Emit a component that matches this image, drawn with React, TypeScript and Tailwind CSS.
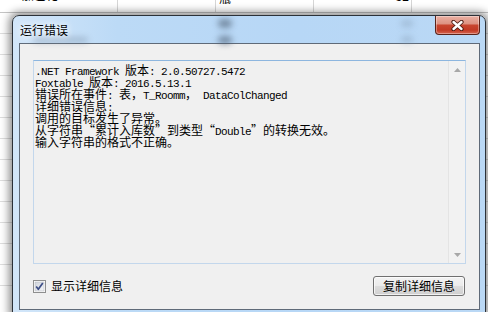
import React from "react";

const A =
  "inline-block w-[6px] h-[12px] leading-[12px] text-[11px] whitespace-pre [font-family:'Liberation_Mono','DejaVu_Sans_Mono',monospace]";
const C =
  "inline-block w-[12px] h-[12px] leading-[12px] text-[12px] whitespace-pre [font-family:'Noto_Sans_CJK_SC',sans-serif]";
const CQO =
  "inline-block w-[12px] h-[12px] leading-[12px] text-[12px] text-right whitespace-pre [font-family:'Noto_Sans_CJK_SC',sans-serif]";
const CQC =
  "inline-block w-[12px] h-[12px] leading-[12px] text-[12px] text-left whitespace-pre [font-family:'Noto_Sans_CJK_SC',sans-serif]";

function MonoLine({ text }: { text: string }) {
  return (
    <div className="h-[12px] leading-[12px] whitespace-nowrap text-black">
      {Array.from(text).map((ch, i) => {
        if (ch.charCodeAt(0) < 128)
          return (
            <span key={i} className={A}>
              {ch}
            </span>
          );
        if (ch === "“")
          return (
            <span key={i} className={CQO}>
              {ch}
            </span>
          );
        if (ch === "”")
          return (
            <span key={i} className={CQC}>
              {ch}
            </span>
          );
        return (
          <span key={i} className={C}>
            {ch}
          </span>
        );
      })}
    </div>
  );
}

const lines = [
  ".NET Framework 版本: 2.0.50727.5472",
  "Foxtable 版本: 2016.5.13.1",
  "错误所在事件: 表，T_Roomm， DataColChanged",
  "详细错误信息:",
  "调用的目标发生了异常。",
  "从字符串“累计入库数”到类型“Double”的转换无效。",
  "输入字符串的格式不正确。",
];

const cjk = "[font-family:'Noto_Sans_CJK_SC',sans-serif]";

export default function App() {
  return (
    <div className="relative w-[488px] h-[312px] overflow-hidden bg-white">
      {/* spreadsheet in background */}
      <div className="flex flex-col">
        <div className="flex h-[13px] border-b border-[#c4c4c4] text-[12px] text-black overflow-hidden [font-family:'Noto_Sans_CJK_SC',sans-serif]">
          <div className="w-[118px] border-r border-[#d6d6d6] pl-[22px]">
            <div className="-mt-[12px] leading-[14px]">加己化</div>
          </div>
          <div className="w-[98px] border-r border-[#d6d6d6]" />
          <div className="w-[98px] border-r border-[#d6d6d6] pl-[3px]">
            <div className="-mt-[9px] leading-[14px]">瓶</div>
          </div>
          <div className="w-[98px] border-r border-[#d6d6d6] pr-[2px] text-right">
            <div className="-mt-[11px] leading-[14px]">32</div>
          </div>
          <div className="flex-1" />
        </div>
        <div className="h-[21px] border-b border-[#dedede]" />
        <div className="h-[21px] border-b border-[#dedede]" />
        <div className="h-[21px] border-b border-[#dedede]" />
        <div className="h-[21px] border-b border-[#dedede]" />
        <div className="h-[21px] border-b border-[#dedede]" />
        <div className="h-[21px] border-b border-[#dedede]" />
        <div className="h-[21px] border-b border-[#dedede]" />
        <div className="h-[21px] border-b border-[#dedede]" />
        <div className="h-[21px] border-b border-[#dedede]" />
        <div className="h-[21px] border-b border-[#dedede]" />
        <div className="h-[21px] border-b border-[#dedede]" />
        <div className="h-[21px] border-b border-[#dedede]" />
        <div className="h-[21px] border-b border-[#dedede]" />
      </div>

      {/* dialog window */}
      <div className="absolute left-[12px] top-[15px] w-[474px] h-[300px] rounded-t-[7px] border border-[#2b3138] shadow-[0_0_9px_3px_rgba(0,0,0,0.45)] bg-[linear-gradient(to_right,#d2e6f9,#bcdaf6_22%,#b7d7f6_60%,#bad8f5)] flex flex-col pl-[6px] pr-[5px] pb-[4px] overflow-hidden">
        {/* blurred background glimpses through glass */}
        <div className="absolute left-[205px] top-[3px] w-[14px] h-[9px] rounded-full bg-[#4a5a6e] opacity-60 blur-[3px]" />
        <div className="absolute left-[205px] top-[20px] w-[14px] h-[8px] rounded-full bg-[#4a5a6e] opacity-60 blur-[3px]" />
        <div className="absolute left-[388px] top-[4px] w-[12px] h-[7px] rounded-full bg-[#7f95ad] opacity-40 blur-[3px]" />
        <div className="absolute left-[388px] top-[20px] w-[12px] h-[7px] rounded-full bg-[#7f95ad] opacity-40 blur-[3px]" />
        <div className="absolute left-[20px] top-[21px] w-[55px] h-[6px] rounded-full bg-[#5a6a80] opacity-30 blur-[3px]" />

        {/* title bar */}
        <div className="relative h-[27px] flex justify-between items-start">
          <div
            className={
              "mt-[6px] ml-[1px] text-[12px] leading-[16px] text-black [text-shadow:0_0_6px_#ffffff,0_0_10px_#ffffff] " +
              cjk
            }
          >
            运行错误
          </div>
          <div className="w-[45px] h-[19px] rounded-b-[4px] border border-t-0 border-[#5a2219] bg-[linear-gradient(to_bottom,#eab0a3_0%,#de9383_42%,#c8452f_52%,#c23a25_78%,#d6644f_100%)] shadow-[inset_0_0_0_1px_rgba(255,255,255,0.35)] flex items-center justify-center">
            <svg width="13" height="11" viewBox="0 0 13 11">
              <path
                d="M2.5 2 L10.5 9 M10.5 2 L2.5 9"
                stroke="#4a1810"
                strokeWidth="4.2"
                strokeLinecap="round"
                fill="none"
              />
              <path
                d="M2.5 2 L10.5 9 M10.5 2 L2.5 9"
                stroke="#ffffff"
                strokeWidth="2.4"
                strokeLinecap="round"
                fill="none"
              />
            </svg>
          </div>
        </div>

        {/* client area */}
        <div className="h-[267px] border border-[#5f6a78] bg-[#f0f0f0] flex flex-col pt-[16px] pl-[13px] pr-[13px]">
          {/* text box */}
          <div className="h-[204px] border border-[#c3d7ec] border-t-[#8db6df] bg-[#f0f0f0] flex">
            <div className="flex-1 pl-[1px] pt-[2px] overflow-hidden">
              {lines.map((l, i) => (
                <MonoLine key={i} text={l} />
              ))}
            </div>
            <div className="w-[17px] border-l border-[#e4e4e4] bg-[#f2f2f2] flex flex-col justify-between">
              <div className="h-[17px] flex items-center justify-center">
                <svg width="7" height="4" viewBox="0 0 7 4">
                  <path d="M3.5 0 L7 4 L0 4 Z" fill="#a8a8a8" />
                </svg>
              </div>
              <div className="h-[17px] flex items-center justify-center">
                <svg width="7" height="4" viewBox="0 0 7 4">
                  <path d="M0 0 L7 0 L3.5 4 Z" fill="#a8a8a8" />
                </svg>
              </div>
            </div>
          </div>

          {/* bottom row */}
          <div className="mt-[12px] flex items-center justify-between">
            <div className="flex items-center gap-[5px]">
              <svg width="13" height="13" viewBox="0 0 13 13">
                <defs>
                  <linearGradient id="cbg" x1="0" y1="0" x2="1" y2="1">
                    <stop offset="0" stopColor="#cfd4dc" />
                    <stop offset="1" stopColor="#f4f5f7" />
                  </linearGradient>
                </defs>
                <rect x="0.5" y="0.5" width="12" height="12" fill="#ffffff" stroke="#8e8f8f" />
                <rect x="2" y="2" width="9" height="9" fill="url(#cbg)" stroke="#b2b6bd" strokeWidth="0.5" />
                <path
                  d="M3.2 6.6 L5.3 9.3 L9.8 2.9"
                  stroke="#3d4e86"
                  strokeWidth="1.7"
                  fill="none"
                  strokeLinejoin="round"
                />
              </svg>
              <span className={"text-[12px] leading-[16px] text-black " + cjk}>显示详细信息</span>
            </div>
            <div
              className={
                "mr-[1px] w-[92px] h-[20px] rounded-[3px] border border-[#707070] bg-[linear-gradient(to_bottom,#f3f3f3_0%,#ebebeb_48%,#dddddd_52%,#cfcfcf_100%)] shadow-[inset_0_0_0_1px_rgba(255,255,255,0.7)] flex items-center justify-center text-[12px] leading-[16px] text-black " +
                cjk
              }
            >
              复制详细信息
            </div>
          </div>
        </div>
      </div>
    </div>
  );
}
